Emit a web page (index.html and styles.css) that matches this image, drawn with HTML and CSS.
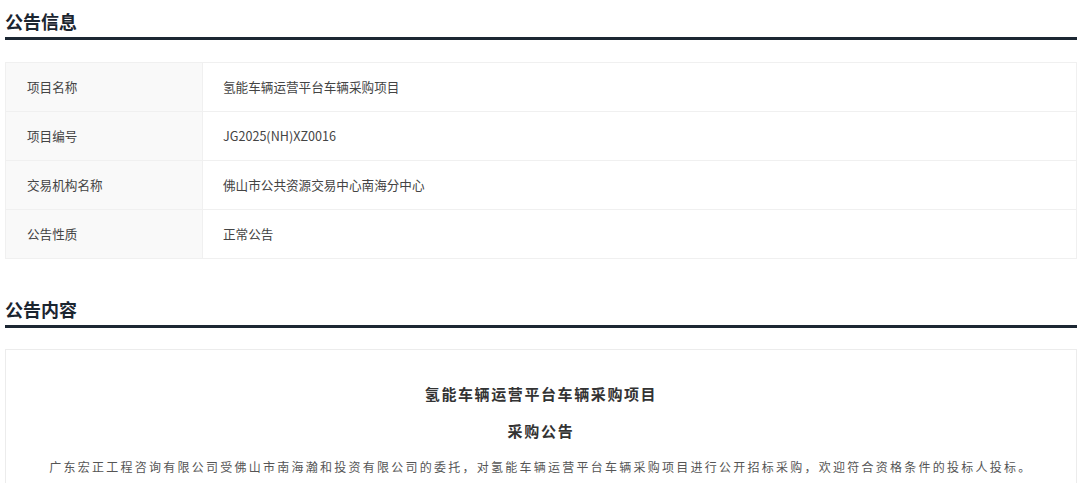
FILE: index.html
```html
<!DOCTYPE html>
<html lang="zh">
<head>
<meta charset="utf-8">
<link rel="stylesheet" href="styles.css">
</head>
<body>
<div class="page">
  <section class="section">
    <h2 class="sec-title">公告信息</h2>
    <div class="info">
      <div class="row"><div class="label">项目名称</div><div class="value">氢能车辆运营平台车辆采购项目</div></div>
      <div class="row"><div class="label">项目编号</div><div class="value">JG2025(NH)XZ0016</div></div>
      <div class="row"><div class="label">交易机构名称</div><div class="value">佛山市公共资源交易中心南海分中心</div></div>
      <div class="row"><div class="label">公告性质</div><div class="value">正常公告</div></div>
    </div>
  </section>
  <section class="section second">
    <h2 class="sec-title">公告内容</h2>
    <div class="content">
      <p class="doc-title">氢能车辆运营平台车辆采购项目</p>
      <p class="doc-sub">采购公告</p>
      <p class="doc-text">广东宏正工程咨询有限公司受佛山市南海瀚和投资有限公司的委托，对氢能车辆运营平台车辆采购项目进行公开招标采购，欢迎符合资格条件的投标人投标。</p>
    </div>
  </section>
</div>
</body>
</html>
```

FILE: styles.css
```css
* { box-sizing: border-box; }
html, body { margin: 0; padding: 0; background: #fff; }
body {
  font-family: "Noto Sans CJK SC", "Noto Sans", sans-serif;
  color: #333;
}
.page {
  width: 1072px;
  margin-left: 5px;
}
.section { padding-top: 8px; }
.section.second { padding-top: 37px; }
.sec-title {
  margin: 0;
  font-size: 18px;
  font-weight: 700;
  line-height: 26px;
  color: #1b2530;
  padding-bottom: 3px;
  border-bottom: 3px solid #1c2733;
}
.info {
  margin-top: 22px;
  border: 1px solid #f0f0f0;
}
.row {
  display: flex;
  height: 49px;
  border-top: 1px solid #f0f0f0;
}
.row:first-child { border-top: none; height: 48px; }
.label {
  width: 197px;
  background: #f9f9f9;
  border-right: 1px solid #f0f0f0;
  padding-left: 21px;
  padding-bottom: 1px;
  display: flex;
  align-items: center;
  font-size: 12.6px;
  color: #444;
}
.value {
  flex: 1;
  padding-left: 20px;
  padding-bottom: 1px;
  display: flex;
  align-items: center;
  font-size: 12.6px;
  color: #444;
}
.content {
  margin-top: 21px;
  border: 1px solid #ececec;
  border-bottom: none;
  height: 140px;
  text-align: center;
  padding-top: 34px;
}
.doc-title {
  margin: 0;
  font-size: 15px;
  font-weight: 700;
  letter-spacing: 1.6px;
  line-height: 20px;
  color: #333;
}
.doc-sub {
  margin: 17px 0 0;
  font-size: 15px;
  font-weight: 700;
  letter-spacing: 1.8px;
  line-height: 20px;
  color: #333;
}
.doc-text {
  margin: 16px 0 0;
  font-size: 12px;
  letter-spacing: 2.25px;
  line-height: 20px;
  color: #555;
}
```
